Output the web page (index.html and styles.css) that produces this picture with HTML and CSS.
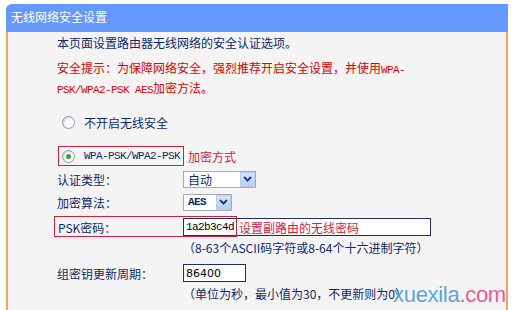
FILE: index.html
```html
<!DOCTYPE html>
<html lang="zh-CN">
<head>
    <meta charset="UTF-8">
    <title>无线网络安全设置</title>
    <link rel="stylesheet" href="styles.css">
</head>
<body>
    <div class="panel">
        <div class="panel-title">无线网络安全设置</div>
        <div class="panel-body">
            <p class="intro">本页面设置路由器无线网络的安全认证选项。</p>
            <p class="warn">安全提示：为保障网络安全，强烈推荐开启安全设置，并使用<span class="mono">WPA-</span><br><span class="mono">PSK/WPA2-PSK AES</span>加密方法。</p>

            <div class="radio-row">
                <span class="radio"></span>
                <span>不开启无线安全</span>
            </div>

            <div class="radio-row mode">
                <span class="mark-box">
                    <span class="radio checked"></span>
                    <span class="mono">WPA-PSK/WPA2-PSK</span>
                </span>
                <span class="note">加密方式</span>
            </div>

            <div class="field first">
                <span class="label">认证类型：</span>
                <span class="select auth">
                    <span class="select-value">自动</span>
                    <span class="arrow"><svg width="9" height="6" viewBox="0 0 9 6"><path d="M1 1 L4.5 4.5 L8 1" fill="none" stroke="#1d3f8f" stroke-width="2"/></svg></span>
                </span>
            </div>

            <div class="field">
                <span class="label">加密算法：</span>
                <span class="select algo">
                    <span class="select-value mono bold">AES</span>
                    <span class="arrow"><svg width="9" height="6" viewBox="0 0 9 6"><path d="M1 1 L4.5 4.5 L8 1" fill="none" stroke="#1d3f8f" stroke-width="2"/></svg></span>
                </span>
            </div>

            <div class="field psk">
                <span class="mark-frame"></span>
                <span class="label">PSK密码：</span>
                <span class="input long">
                    <span class="mono">1a2b3c4d</span>
                    <span class="note inline">设置副路由的无线密码</span>
                </span>
            </div>
            <p class="hint">（8-63个ASCII码字符或8-64个十六进制字符）</p>

            <div class="field renew">
                <span class="label">组密钥更新周期：</span>
                <span class="input short">86400</span>
            </div>
            <p class="hint">（单位为秒，最小值为30，不更新则为0）</p>
        </div>
    </div>
    <div class="watermark">xuexila<span>.com</span></div>
</body>
</html>
```

FILE: styles.css
```css
* {
    box-sizing: border-box;
    margin: 0;
    padding: 0;
}

body {
    font-family: "Noto Sans CJK SC", "Liberation Sans", sans-serif;
    font-size: 12px;
    color: #10296b;
    background: #fff;
    height: 310px;
    overflow: hidden;
    position: relative;
}

.panel {
    margin: 4px 0 0 6px;
    width: 502px;
    height: 320px;
    background: #f4f4f4;
    border-left: 2px solid #f0a65c;
    border-right: 2px solid #f0a65c;
    border-top-left-radius: 6px;
}

.panel-title {
    height: 28px;
    line-height: 26px;
    padding-left: 5px;
    margin: 0 -2px;
    color: #fff;
    background: #6699ff;
    border-top-left-radius: 6px;
}

.panel-body {
    padding: 2px 0 0 49px;
}

.intro,
.warn,
.hint {
    line-height: 18px;
}

.warn {
    margin-top: 7px;
    color: #e00000;
}

.mono {
    font-family: "Liberation Mono", monospace;
    font-size: 11px;
    letter-spacing: -0.6px;
}

.bold {
    font-weight: bold;
}

.radio-row {
    display: flex;
    align-items: center;
    height: 20px;
    margin-top: 13px;
    padding-left: 5px;
    gap: 9px;
}

.radio-row.mode {
    margin-top: 14px;
    padding-left: 1px;
    gap: 4px;
}

.mark-box {
    display: flex;
    align-items: center;
    gap: 9px;
    height: 20px;
    width: 126px;
    padding-left: 3px;
    border: 1px solid #d4203c;
}

.radio {
    width: 13px;
    height: 13px;
    border-radius: 50%;
    border: 1px solid #8a9bb6;
    background: #fff;
    box-shadow: inset 1px 1px 2px #c9d2e0;
    display: flex;
    align-items: center;
    justify-content: center;
}

.radio.checked::after {
    content: "";
    width: 5px;
    height: 5px;
    border-radius: 50%;
    background: #3da23d;
}

.note {
    color: #d4203c;
}

.field {
    display: flex;
    align-items: center;
    height: 20px;
    margin-top: 3px;
    position: relative;
}

.field.psk {
    margin-top: 5px;
}

.field.renew {
    margin-top: 6px;
}

.label {
    width: 126px;
    flex-shrink: 0;
}

.psk .label {
    padding-left: 1px;
}

.select {
    display: flex;
    align-items: center;
    height: 17px;
    background: #fff;
    border: 1px solid #a5acb2;
}

.select.auth {
    width: 73px;
}

.select.algo {
    width: 49px;
}

.select-value {
    flex: 1;
    padding-left: 4px;
    line-height: 15px;
}

.arrow {
    width: 15px;
    height: 15px;
    display: flex;
    align-items: center;
    justify-content: center;
    background: linear-gradient(#d8e4f8, #b9cdf1);
    border: 1px solid #bccde9;
}

.input {
    display: flex;
    align-items: center;
    height: 18px;
    background: #fff;
    border: 1px solid #1d2f66;
    padding-left: 2px;
    color: #000;
}

.input.long {
    width: 248px;
    gap: 5px;
}

.input.short {
    width: 63px;
    font-family: "DejaVu Sans", sans-serif;
    font-size: 11px;
}

.mark-frame {
    position: absolute;
    left: -3px;
    top: -1px;
    width: 183px;
    height: 21px;
    border: 1px solid #d4203c;
    pointer-events: none;
}

.hint {
    margin: 2px 0 0 126px;
}

.watermark {
    position: absolute;
    left: 393px;
    top: 282px;
    font-family: "Liberation Sans", sans-serif;
    font-size: 22px;
    color: #5aa7db;
    letter-spacing: -0.3px;
}

.watermark span {
    color: #ea5d97;
}
```
